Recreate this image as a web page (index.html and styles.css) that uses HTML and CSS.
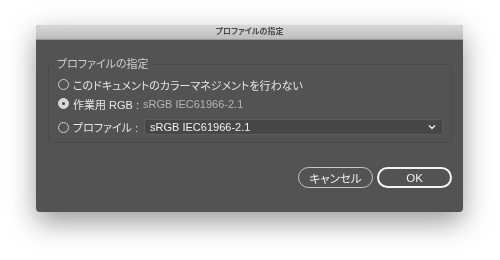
FILE: index.html
```html
<!DOCTYPE html>
<html lang="ja">
<head>
    <meta charset="UTF-8">
    <title>プロファイルの指定</title>
    <link rel="stylesheet" href="styles.css">
</head>
<body>
    <div class="stage">
        <div class="window">
            <div class="titlebar">プロファイルの指定</div>
            <div class="content">
                <fieldset class="group">
                    <legend>プロファイルの指定</legend>
                    <div class="row row-first">
                        <span class="radio"></span>
                        <span class="label">このドキュメントのカラーマネジメントを行わない</span>
                    </div>
                    <div class="row">
                        <span class="radio checked"></span>
                        <span class="label">作業用 RGB :</span>
                        <span class="dim">sRGB IEC61966-2.1</span>
                    </div>
                    <div class="row row-popup">
                        <span class="radio"></span>
                        <span class="label">プロファイル :</span>
                        <div class="popup">
                            <span>sRGB IEC61966-2.1</span>
                            <svg class="chevron" width="8" height="6" viewBox="0 0 8 6">
                                <path d="M1 1.5 L4 4.5 L7 1.5" fill="none" stroke="#f0f0f0" stroke-width="1.5"/>
                            </svg>
                        </div>
                    </div>
                </fieldset>
                <div class="buttons">
                    <button class="btn">キャンセル</button>
                    <button class="btn btn-default">OK</button>
                </div>
            </div>
        </div>
    </div>
</body>
</html>
```

FILE: styles.css
```css
html,
body {
    margin: 0;
    height: 100%;
    background-color: #fff;
}

body {
    font-family: 'Liberation Sans', 'Noto Sans CJK JP', sans-serif;
    font-feature-settings: "palt";
}

.stage {
    padding: 25px 0 0 36px;
}

/* ダイアログ本体 */
.window {
    width: 427px;
    height: 187px;
    border-radius: 4px;
    background-color: #535353;
    filter: drop-shadow(0 10px 14px rgba(0, 0, 0, 0.4));
    display: flex;
    flex-direction: column;
}

.titlebar {
    height: 14px;
    line-height: 14px;
    text-align: center;
    font-size: 8px;
    font-weight: bold;
    color: #4a4a4a;
    border-radius: 4px 4px 0 0;
    background: linear-gradient(#d8d8d8, #bcbcbc);
    border-bottom: 1px solid #9a9a9a;
}

.content {
    flex: 1;
    padding: 17px 11px 0 12px;
    display: flex;
    flex-direction: column;
}

.group {
    margin: 0;
    padding: 0 0 0 9px;
    height: 84px;
    border: 1px solid #4a4a4a;
    border-radius: 3px;
}

.group legend {
    margin-left: -4px;
    padding: 0 3px;
    font-size: 11px;
    line-height: 14px;
    color: #cfcfcf;
}

.row {
    display: flex;
    align-items: center;
    height: 19px;
    font-size: 11px;
    color: #e6e6e6;
}

.row-first {
    margin-top: 4px;
}

.row-popup {
    margin-top: 6px;
    height: 16px;
}

.radio {
    position: relative;
    width: 9px;
    height: 9px;
    border: 1px solid #cfcfcf;
    border-radius: 50%;
    margin-right: 4px;
    flex-shrink: 0;
}

.radio.checked {
    background-color: #d8d8d8;
    border-color: #d8d8d8;
}

.radio.checked::after {
    content: '';
    position: absolute;
    top: 3px;
    left: 3px;
    width: 3px;
    height: 3px;
    border-radius: 50%;
    background-color: #444;
}

.dim {
    margin-left: 4px;
    color: #b4b4b4;
}

.popup {
    flex: 1;
    height: 14px;
    margin: 0 8px 0 6px;
    padding: 0 6px 0 5px;
    background-color: #474747;
    border: 1px solid #5d5d5d;
    border-radius: 2px;
    display: flex;
    align-items: center;
    justify-content: space-between;
    color: #f0f0f0;
}

.buttons {
    display: flex;
    justify-content: flex-end;
    gap: 4px;
    margin-top: 24px;
}

.btn {
    width: 75px;
    height: 21px;
    padding: 0;
    border: 1px solid #c8c8c8;
    border-radius: 11px;
    background-color: #535353;
    color: #f0f0f0;
    font-family: inherit;
    font-feature-settings: "palt";
    font-size: 11.5px;
}

.btn-default {
    border: 2px solid #f4f4f4;
}
```
